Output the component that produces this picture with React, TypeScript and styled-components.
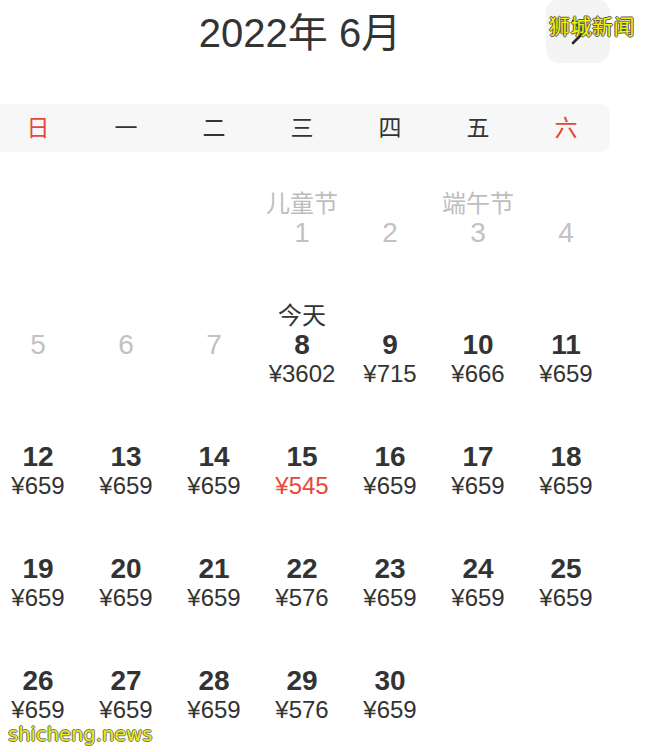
import React from "react";
import styled, { createGlobalStyle } from "styled-components";

const Global = createGlobalStyle`
  html, body { margin: 0; padding: 0; background: #ffffff; }
  body { font-family: "Liberation Sans", "Noto Sans CJK SC", sans-serif; color: #333; }
`;

const Page = styled.div`
  position: relative;
  width: 648px;
  height: 752px;
  overflow: hidden;
  background: #fff;
`;

const Header = styled.header`
  width: 616px;
  margin-left: -6px;
  height: 104px;
  display: grid;
  grid-template-columns: 1fr auto 1fr;
  align-items: start;
`;

const Title = styled.h1`
  grid-column: 2;
  margin: 13px 0 0;
  font-size: 40px;
  line-height: 40px;
  font-weight: 400;
  color: #333;
  white-space: pre;
  transform: translateX(-2px);
`;

const NextButton = styled.button`
  grid-column: 3;
  justify-self: end;
  margin-top: -1px;
  width: 64px;
  height: 64px;
  border: none;
  border-radius: 14px;
  background: #f4f4f5;
  display: flex;
  align-items: center;
  justify-content: center;
  padding: 0;
`;

const WeekBar = styled.div`
  width: 616px;
  margin-left: -6px;
  height: 48px;
  display: grid;
  grid-template-columns: repeat(7, 88px);
  align-items: center;
  background: #f7f7f8;
  border-radius: 0 10px 10px 0;
`;

const WeekDay = styled.div<{ $weekend?: boolean }>`
  text-align: center;
  font-size: 23px;
  line-height: 29px;
  color: ${(p) => (p.$weekend ? "#e5473b" : "#333")};
`;

const Grid = styled.div`
  width: 616px;
  margin-left: -6px;
  margin-top: 37px;
  display: grid;
  grid-template-columns: repeat(7, 88px);
  grid-auto-rows: 112px;
`;

const Cell = styled.div`
  display: flex;
  flex-direction: column;
  align-items: center;
`;

const Label = styled.div<{ $muted?: boolean }>`
  height: 29px;
  font-size: 24px;
  line-height: 29px;
  color: ${(p) => (p.$muted ? "#bdbdbd" : "#333")};
  white-space: nowrap;
`;

const DayNum = styled.div<{ $muted?: boolean }>`
  height: 29px;
  font-size: 28px;
  line-height: 29px;
  font-weight: ${(p) => (p.$muted ? 400 : 700)};
  color: ${(p) => (p.$muted ? "#c2c2c2" : "#333")};
`;

const Price = styled.div<{ $low?: boolean }>`
  height: 29px;
  font-size: 24px;
  line-height: 29px;
  color: ${(p) => (p.$low ? "#e8483b" : "#333")};
`;

const WatermarkTop = styled.div`
  position: absolute;
  left: 549px;
  top: 12px;
  font-family: "Noto Sans CJK SC", sans-serif;
  font-size: 21px;
  line-height: 26px;
  letter-spacing: 0.5px;
  color: #f5f300;
  text-shadow: -1px 0 #555, 1px 0 #555, 0 -1px #555, 0 1px #555;
`;

const WatermarkBottom = styled.div`
  position: absolute;
  left: 8px;
  top: 723px;
  font-family: "DejaVu Sans", sans-serif;
  font-size: 19.5px;
  line-height: 24px;
  color: #eaea10;
  text-shadow: -1px 0 #777, 1px 0 #777, 0 -1px #777, 0 1px #777;
`;

type Day = {
  d: number;
  label?: string;
  price?: number;
  muted?: boolean;
  low?: boolean;
};

const days: Day[] = [
  { d: 1, label: "儿童节", muted: true },
  { d: 2, muted: true },
  { d: 3, label: "端午节", muted: true },
  { d: 4, muted: true },
  { d: 5, muted: true },
  { d: 6, muted: true },
  { d: 7, muted: true },
  { d: 8, label: "今天", price: 3602 },
  { d: 9, price: 715 },
  { d: 10, price: 666 },
  { d: 11, price: 659 },
  { d: 12, price: 659 },
  { d: 13, price: 659 },
  { d: 14, price: 659 },
  { d: 15, price: 545, low: true },
  { d: 16, price: 659 },
  { d: 17, price: 659 },
  { d: 18, price: 659 },
  { d: 19, price: 659 },
  { d: 20, price: 659 },
  { d: 21, price: 659 },
  { d: 22, price: 576 },
  { d: 23, price: 659 },
  { d: 24, price: 659 },
  { d: 25, price: 659 },
  { d: 26, price: 659 },
  { d: 27, price: 659 },
  { d: 28, price: 659 },
  { d: 29, price: 576 },
  { d: 30, price: 659 },
];

const weekdays = ["日", "一", "二", "三", "四", "五", "六"];

export default function App() {
  return (
    <>
      <Global />
      <Page>
        <Header>
          <Title>2022年 6月</Title>
          <NextButton aria-label="下个月">
            <svg width="24" height="30" viewBox="0 0 24 30" fill="none">
              <path
                d="M7 5 L18 16 L7 27"
                stroke="#2a2a2a"
                strokeWidth="2.6"
                strokeLinecap="round"
                strokeLinejoin="round"
              />
            </svg>
          </NextButton>
        </Header>
        <WeekBar>
          {weekdays.map((w, i) => (
            <WeekDay key={w} $weekend={i === 0 || i === 6}>
              {w}
            </WeekDay>
          ))}
        </WeekBar>
        <Grid>
          {[0, 1, 2].map((i) => (
            <Cell key={"b" + i} />
          ))}
          {days.map((day) => (
            <Cell key={day.d}>
              <Label $muted={day.muted}>{day.label ?? ""}</Label>
              <DayNum $muted={day.muted}>{day.d}</DayNum>
              {day.price !== undefined && (
                <Price $low={day.low}>¥{day.price}</Price>
              )}
            </Cell>
          ))}
        </Grid>
        <WatermarkTop>狮城新闻</WatermarkTop>
        <WatermarkBottom>shicheng.news</WatermarkBottom>
      </Page>
    </>
  );
}
